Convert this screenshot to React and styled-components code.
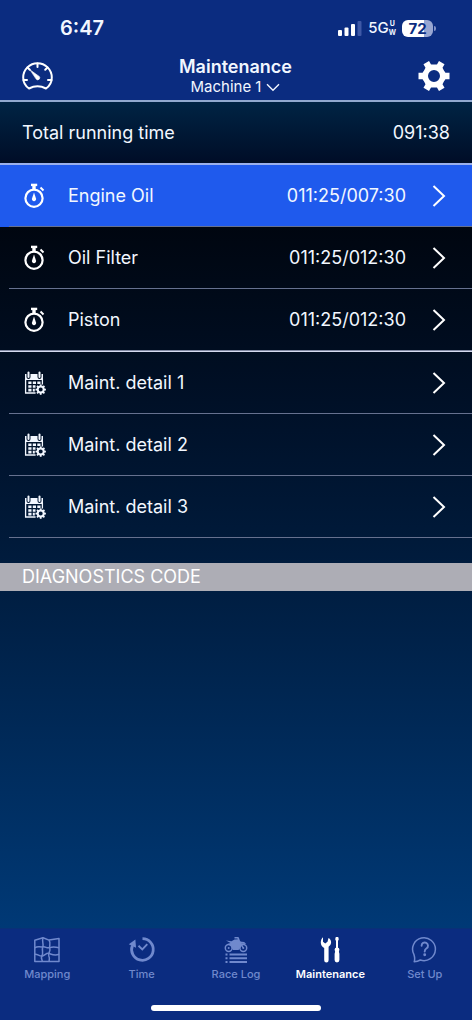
import React from 'react'
import styled, { createGlobalStyle } from 'styled-components'

const GlobalStyle = createGlobalStyle`
    * {
        box-sizing: border-box;
    }
    body {
        margin: 0;
        background: #0b2c80;
        color: #f2f7ff;
        font-family: Inter, "Liberation Sans", sans-serif;
        -webkit-font-smoothing: antialiased;
    }
    button {
        margin: 0;
        padding: 0;
        border: 0;
        background: none;
        color: inherit;
        font: inherit;
        cursor: pointer;
    }
    svg {
        display: block;
        flex: none;
    }
`

const Page = styled.div`
    display: flex;
    flex-direction: column;
    min-height: 100vh;
`

const StatusBar = styled.div`
    display: flex;
    align-items: center;
    justify-content: space-between;
    height: 56px;
    padding: 0 36px 0 60px;
`

const Clock = styled.time`
    font-size: 20px;
    font-weight: 600;
    line-height: 24px;
`

const Signals = styled.div`
    display: flex;
    align-items: center;
    gap: 6px;
`

const Network = styled.span`
    display: flex;
    align-items: center;
    font-size: 15px;
    font-weight: 500;
    line-height: 20px;
`

const NetworkSuffix = styled.span`
    display: flex;
    flex-direction: column;
    font-size: 7px;
    font-weight: 700;
    line-height: 9px;
    text-align: center;
`

const Battery = styled.span`
    display: flex;
    align-items: center;
    gap: 1px;
`

const BatteryLevel = styled.span`
    width: 31px;
    border-radius: 6px;
    background: linear-gradient(to right, #fff ${props => props.$level}%, #98a6d2 ${props => props.$level}%);
    color: #0b2c80;
    font-size: 15px;
    font-weight: 700;
    line-height: 17px;
    text-align: center;
`

const BatteryTip = styled.span`
    width: 2px;
    height: 5px;
    border-radius: 0 2px 2px 0;
    background: #8292c6;
`

const NavBar = styled.header`
    display: flex;
    align-items: center;
    justify-content: space-between;
    height: 46px;
    padding: 0 22px 4px;
    border-bottom: 2px solid #91a9cf;
`

const Heading = styled.div`
    display: flex;
    flex-direction: column;
    align-items: center;
`

const Title = styled.h1`
    margin: 0;
    font-size: 18px;
    font-weight: 600;
    line-height: 22px;
`

const MachineButton = styled.button`
    display: flex;
    align-items: center;
    gap: 5px;
    font-size: 15px;
    line-height: 18px;
`

const Content = styled.main`
    flex: 1;
    background: linear-gradient(#000610 125px, #001027 300px, #001a3a 440px, #003976 100%);
`

const Total = styled.div`
    display: flex;
    align-items: center;
    justify-content: space-between;
    height: 63px;
    padding: 0 22px;
    border-bottom: 2px solid #9ab0ec;
    background: linear-gradient(#002444, #000d27);
    font-size: 18px;
    line-height: 24px;
`

const List = styled.ul`
    margin: 0;
    padding: 0;
    list-style: none;

    & + & {
        border-top: 1px solid #d5daef;
    }
`

const Item = styled.li`
    position: relative;
    background: ${props => (props.$due ? '#1f5aed' : 'transparent')};

    &::after {
        content: '';
        position: absolute;
        right: 0;
        bottom: 0;
        left: ${props => (props.$last ? 0 : 9)}px;
        height: 1px;
        background: ${props => (props.$last ? '#8088a2' : '#66718f')};
    }
`

const ItemButton = styled.button`
    display: grid;
    grid-template-columns: 24px 1fr auto 14px;
    align-items: center;
    width: 100%;
    height: 62px;
    padding: 0 26px 0 22px;
    font-size: 18px;
    line-height: 24px;
    text-align: left;
`

const ItemName = styled.span`
    padding-left: 22px;
`

const ItemTime = styled.span`
    padding-right: 26px;
`

const SectionTitle = styled.h2`
    margin: 25px 0 0;
    padding: 0 22px;
    background: #adadb5;
    color: #fff;
    font-size: 18px;
    font-weight: 400;
    line-height: 28px;
`

const TabBar = styled.nav`
    display: grid;
    grid-template-columns: repeat(5, 1fr);
    padding-top: 7px;
    border-top: 1px solid #0a3077;
`

const Tab = styled.a`
    display: flex;
    flex-direction: column;
    align-items: center;
    gap: 3px;
    color: ${props => (props.$active ? '#fff' : '#7089cd')};
    font-size: 11px;
    font-weight: ${props => (props.$active ? 600 : 500)};
    line-height: 14px;
    text-decoration: none;
`

const HomeIndicator = styled.div`
    width: 36%;
    height: 6px;
    margin: 24px auto 9px;
    border-radius: 3px;
    background: #fff;
`

function SignalIcon() {
    return (
        <svg width="24" height="16" viewBox="0 0 24 16" fill="#fff">
            <rect x="0" y="10" width="4" height="6" rx="1" />
            <rect x="6.500" y="7.500" width="4" height="8.500" rx="1" />
            <rect x="13" y="4" width="4" height="12" rx="1" />
            <rect x="19.500" y="1" width="4" height="15" rx="1" fill="#3f59a6" />
        </svg>
    )
}

function GaugeIcon() {
    return (
        <svg width="31" height="28" viewBox="0 0 31 28" fill="none" stroke="#fff" strokeWidth="2" strokeLinecap="round" strokeLinejoin="round">
            <path d="M7 26.500C3.400 24 1.200 20 1.200 15.500a14.300 14.300 0 0 1 28.600 0c0 4.500-2.200 8.500-5.800 11Q15.500 22 7 26.500Z" />
            <path d="M15.500 1.500V5M5.500 5.500 7.800 7.800M25.500 5.500l-2.300 2.300M1.500 18H5M29.500 18H26" />
            <path d="M8.300 8.100 17.200 14.400a2 2 0 1 1-2.900 2.800Z" fill="#fff" strokeWidth=".6" />
        </svg>
    )
}

function GearIcon() {
    return (
        <svg width="32" height="30" viewBox="-16 -15 32 30" fill="#fff">
            <circle r="8.700" fill="none" stroke="#fff" strokeWidth="5.400" />
            {[0, 60, 120, 180, 240, 300].map(angle => (
                <path key={angle} d="M9.500-5.500 11.500-3.200H15.500V3.200H11.500L9.500 5.500Z" transform={`rotate(${angle})`} />
            ))}
        </svg>
    )
}

function StopwatchIcon() {
    return (
        <svg width="24" height="26" viewBox="0 0 24 26" fill="none" stroke="#fff">
            <circle cx="12" cy="15.200" r="8.600" strokeWidth="2.200" />
            <path d="M9 1.900h6.200" strokeWidth="2.400" />
            <path d="M12 3v3.500" strokeWidth="3.400" />
            <path d="m18.500 4.600 3 2.800" strokeWidth="2" />
            <path d="M12 9.500 14 15.400a2.100 2.100 0 1 1-4 0Z" fill="#fff" stroke="none" />
        </svg>
    )
}

function CalendarIcon() {
    return (
        <svg width="24" height="24" viewBox="0 0 24 24" fill="#f2f7ff">
            <path d="M3 3h1.500V6a2 2 0 0 0 4 0V3h7V6a2 2 0 0 0 4 0V3H21v6H3Z" />
            <rect x="5.500" y="0.500" width="2" height="6.500" rx="1" />
            <rect x="16.500" y="0.500" width="2" height="6.500" rx="1" />
            <path d="M3.600 8v14h10M20.400 8v5.500" fill="none" stroke="#f2f7ff" strokeWidth="1.300" />
            <path d="M6.300 10.500h3.200v2.600h-3.200ZM10.800 10.500h3.200v2.600h-3.200ZM15.300 10.500h3.200v2.600h-3.200ZM6.300 14.200h3.200v2.600h-3.200ZM10.800 14.200h2.700v2.600h-2.700ZM6.300 17.800h3.200v2.600h-3.200ZM10.800 17.800h2v2.600h-2Z" />
            <g transform="translate(18.700 18.600)">
                <circle r="3" fill="none" stroke="#f2f7ff" strokeWidth="2" />
                {[0, 45, 90, 135, 180, 225, 270, 315].map(angle => (
                    <rect key={angle} x="3.300" y="-0.900" width="1.900" height="1.800" transform={`rotate(${angle})`} />
                ))}
            </g>
        </svg>
    )
}

function ChevronRight() {
    return (
        <svg width="14" height="24" viewBox="0 0 14 24" fill="none" stroke="#fff" strokeWidth="2">
            <path d="m1.500 2 10.500 10L1.500 22" />
        </svg>
    )
}

function ChevronDown() {
    return (
        <svg width="14" height="9" viewBox="0 0 14 9" fill="none" stroke="#f2f7ff" strokeWidth="1.400">
            <path d="m1 1.200 6 6 6-6" />
        </svg>
    )
}

function MappingIcon() {
    return (
        <svg width="28" height="28" viewBox="0 0 28 28" fill="none" stroke="currentColor" strokeWidth="1.500" strokeLinejoin="round">
            <path d="M1.800 4.200 10 1.800l6 2.300 10-1.700V25.500H1.800Z" />
            <path d="M10 1.800c-1.500 4.500 1 5.500-.2 9s.8 5.500-.8 8.700.5 4 .2 6" />
            <path d="M16 4.100c2.500 3.500-.3 5.500.8 8.400s-2.300 5-1 7.500.4 4 .2 5.500" />
            <path d="M1.800 11.800c3-2 5-.4 8-1s4 2 7 .8 5-1 9.200.2" />
            <path d="M1.800 18.200c3-.4 4.700 2.600 7.500 1.800s4.200-3.500 7-2.500 5.200 2.500 9.700.8" />
        </svg>
    )
}

function TimeIcon() {
    return (
        <svg width="28" height="28" viewBox="0 0 28 28" fill="none" stroke="currentColor">
            <path d="M14.500 2.700A10.800 10.800 0 1 1 4.400 9.500" strokeWidth="2.800" />
            <path d="M7.400 3.500 8 11.800.8 8.300Z" fill="currentColor" stroke="none" />
            <path d="m10.500 9.800 3.800 3.700 5-5.300" strokeWidth="1.900" />
        </svg>
    )
}

function RaceLogIcon() {
    return (
        <svg width="28" height="28" viewBox="0 0 28 28" fill="currentColor">
            <g fill="none" stroke="currentColor" strokeWidth="1.500">
                <circle cx="6.700" cy="12" r="3.400" />
                <circle cx="21.300" cy="12" r="3.400" />
                <path d="m16 2.500 5.300 9.500M12.500 1.800h3.500l1 2" />
            </g>
            <circle cx="6.700" cy="12" r="1" />
            <circle cx="21.300" cy="12" r="1" />
            <path d="M4 4.500 9.500 5.200l3-1.700 4-.3 1.200 2.300 4.500.4 2 2.200-5.200-.4 1 2-3.500 4.300h-5.500l-2.500-4L5.500 8l3-1Z" />
            <path d="M3.500 17.500h2v2h-2ZM3.500 21.200h2v2h-2ZM3.500 24.900h2v2h-2ZM7.500 17.500h17.500v2.100H7.500ZM7.500 21.200h17.500v2.100H7.500ZM7.500 24.900h17.500v2.100H7.500Z" />
        </svg>
    )
}

function ToolsIcon() {
    return (
        <svg width="28" height="28" viewBox="0 0 28 28" fill="currentColor">
            <path d="M7 1.200v4.600l2.200 1.600 2.300-1.600 1-3.800c1.800 1 2.700 2.700 2.600 4.600-.1 1.900-1.100 3.100-2.500 4.200v13.400a2.200 2.200 0 0 1-4.400 0V12C6 10.800 4.800 9 4.800 6.500c0-2.300.8-4.300 2.200-5.300Z" />
            <path d="M19.800 1h2.400l.6 2.200-.8 1.800v7h-2V5l-.8-1.800Z" />
            <path d="M18.600 13.500q0-2 2.400-2t2.400 2l-.5 2.200.5 2v6.400a2.400 2.400 0 0 1-4.800 0v-6.400l.5-2Z" />
        </svg>
    )
}

function HelpIcon() {
    return (
        <svg width="28" height="28" viewBox="0 0 28 28" fill="none" stroke="currentColor" strokeWidth="1.500" strokeLinecap="round" strokeLinejoin="round">
            <path d="M3.200 25.700c.8-2.400.5-4.800-.2-7a11.400 11.400 0 1 1 6.300 5.300c-1.800 1.100-3.800 1.700-6.100 1.700Z" />
            <path d="M10.600 9.700a3.200 3.200 0 1 1 5 2.600c-1.300.9-1.900 1.600-1.900 3.200" strokeWidth="1.900" />
            <circle cx="13.700" cy="18.800" r=".7" fill="currentColor" />
        </svg>
    )
}

const timers = [
    { name: 'Engine Oil', time: '011:25/007:30', due: true },
    { name: 'Oil Filter', time: '011:25/012:30' },
    { name: 'Piston', time: '011:25/012:30' },
]

const details = [
    { name: 'Maint. detail 1' },
    { name: 'Maint. detail 2' },
    { name: 'Maint. detail 3' },
]

const tabs = [
    { name: 'Mapping', icon: MappingIcon },
    { name: 'Time', icon: TimeIcon },
    { name: 'Race Log', icon: RaceLogIcon },
    { name: 'Maintenance', icon: ToolsIcon, active: true },
    { name: 'Set Up', icon: HelpIcon },
]

function Row({ icon: Icon, name, time, due, last }) {
    return (
        <Item $due={due} $last={last}>
            <ItemButton type="button">
                <Icon />
                <ItemName>{name}</ItemName>
                <ItemTime>{time}</ItemTime>
                <ChevronRight />
            </ItemButton>
        </Item>
    )
}

function App() {
    return (
        <Page>
            <GlobalStyle />
            <StatusBar>
                <Clock>6:47</Clock>
                <Signals>
                    <SignalIcon />
                    <Network>
                        5G
                        <NetworkSuffix>
                            <span>U</span>
                            <span>W</span>
                        </NetworkSuffix>
                    </Network>
                    <Battery>
                        <BatteryLevel $level={72}>72</BatteryLevel>
                        <BatteryTip />
                    </Battery>
                </Signals>
            </StatusBar>
            <NavBar>
                <button type="button" aria-label="Dashboard">
                    <GaugeIcon />
                </button>
                <Heading>
                    <Title>Maintenance</Title>
                    <MachineButton type="button">
                        Machine 1
                        <ChevronDown />
                    </MachineButton>
                </Heading>
                <button type="button" aria-label="Settings">
                    <GearIcon />
                </button>
            </NavBar>
            <Content>
                <Total>
                    <span>Total running time</span>
                    <span>091:38</span>
                </Total>
                <List>
                    {timers.map((item, i) => (
                        <Row key={item.name} icon={StopwatchIcon} last={i === timers.length - 1} {...item} />
                    ))}
                </List>
                <List>
                    {details.map(item => (
                        <Row key={item.name} icon={CalendarIcon} {...item} />
                    ))}
                </List>
                <SectionTitle>DIAGNOSTICS CODE</SectionTitle>
            </Content>
            <TabBar>
                {tabs.map(({ name, icon: Icon, active }) => (
                    <Tab key={name} href="#" $active={active} aria-current={active ? 'page' : undefined}>
                        <Icon />
                        {name}
                    </Tab>
                ))}
            </TabBar>
            <HomeIndicator />
        </Page>
    )
}

export default App
